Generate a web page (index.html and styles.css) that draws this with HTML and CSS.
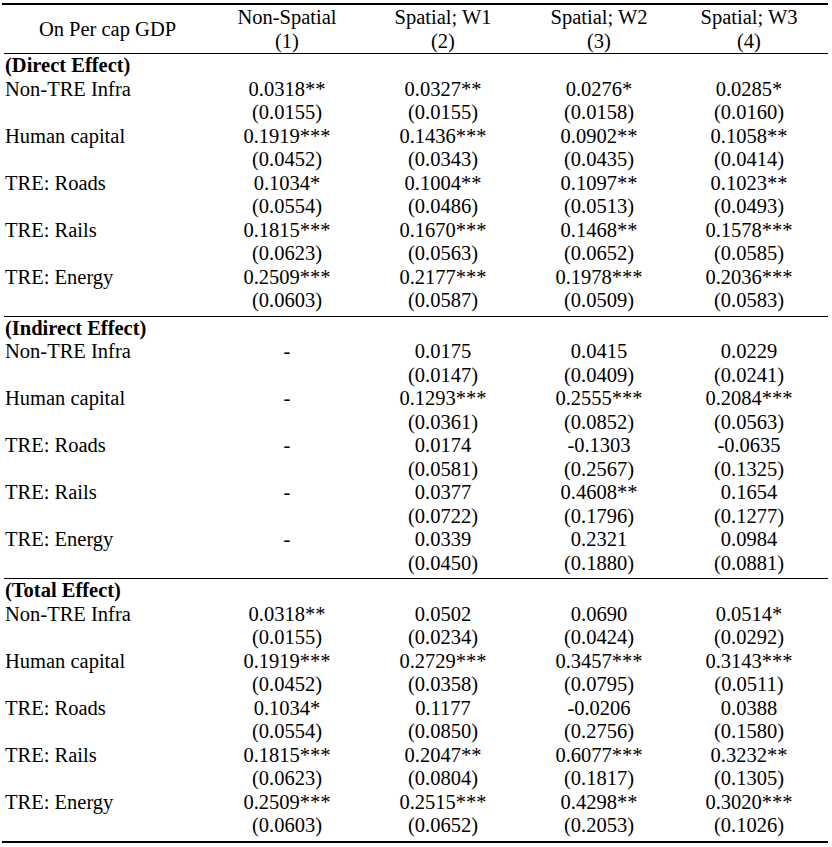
FILE: index.html
```html
<!DOCTYPE html>
<html lang="en">
<head>
<meta charset="utf-8">
<title>On Per cap GDP</title>
<link rel="stylesheet" href="styles.css">
</head>
<body>
<div class="table">
  <div class="rule thick"></div>
  <div class="head">
    <div class="head-label">On Per cap GDP</div>
    <div class="head-cell">Non-Spatial<br>(1)</div>
    <div class="head-cell">Spatial; W1<br>(2)</div>
    <div class="head-cell">Spatial; W2<br>(3)</div>
    <div class="head-cell">Spatial; W3<br>(4)</div>
  </div>
  <div class="rule"></div>

  <div class="block">
    <div class="line"><div class="label bold">(Direct Effect)</div></div>
    <div class="line"><div class="label">Non-TRE Infra</div><div>0.0318**</div><div>0.0327**</div><div>0.0276*</div><div>0.0285*</div></div>
    <div class="line"><div class="label"></div><div>(0.0155)</div><div>(0.0155)</div><div>(0.0158)</div><div>(0.0160)</div></div>
    <div class="line"><div class="label">Human capital</div><div>0.1919***</div><div>0.1436***</div><div>0.0902**</div><div>0.1058**</div></div>
    <div class="line"><div class="label"></div><div>(0.0452)</div><div>(0.0343)</div><div>(0.0435)</div><div>(0.0414)</div></div>
    <div class="line"><div class="label">TRE: Roads</div><div>0.1034*</div><div>0.1004**</div><div>0.1097**</div><div>0.1023**</div></div>
    <div class="line"><div class="label"></div><div>(0.0554)</div><div>(0.0486)</div><div>(0.0513)</div><div>(0.0493)</div></div>
    <div class="line"><div class="label">TRE: Rails</div><div>0.1815***</div><div>0.1670***</div><div>0.1468**</div><div>0.1578***</div></div>
    <div class="line"><div class="label"></div><div>(0.0623)</div><div>(0.0563)</div><div>(0.0652)</div><div>(0.0585)</div></div>
    <div class="line"><div class="label">TRE: Energy</div><div>0.2509***</div><div>0.2177***</div><div>0.1978***</div><div>0.2036***</div></div>
    <div class="line"><div class="label"></div><div>(0.0603)</div><div>(0.0587)</div><div>(0.0509)</div><div>(0.0583)</div></div>
  </div>
  <div class="rule"></div>

  <div class="block">
    <div class="line"><div class="label bold">(Indirect Effect)</div></div>
    <div class="line"><div class="label">Non-TRE Infra</div><div>-</div><div>0.0175</div><div>0.0415</div><div>0.0229</div></div>
    <div class="line"><div class="label"></div><div></div><div>(0.0147)</div><div>(0.0409)</div><div>(0.0241)</div></div>
    <div class="line"><div class="label">Human capital</div><div>-</div><div>0.1293***</div><div>0.2555***</div><div>0.2084***</div></div>
    <div class="line"><div class="label"></div><div></div><div>(0.0361)</div><div>(0.0852)</div><div>(0.0563)</div></div>
    <div class="line"><div class="label">TRE: Roads</div><div>-</div><div>0.0174</div><div>-0.1303</div><div>-0.0635</div></div>
    <div class="line"><div class="label"></div><div></div><div>(0.0581)</div><div>(0.2567)</div><div>(0.1325)</div></div>
    <div class="line"><div class="label">TRE: Rails</div><div>-</div><div>0.0377</div><div>0.4608**</div><div>0.1654</div></div>
    <div class="line"><div class="label"></div><div></div><div>(0.0722)</div><div>(0.1796)</div><div>(0.1277)</div></div>
    <div class="line"><div class="label">TRE: Energy</div><div>-</div><div>0.0339</div><div>0.2321</div><div>0.0984</div></div>
    <div class="line"><div class="label"></div><div></div><div>(0.0450)</div><div>(0.1880)</div><div>(0.0881)</div></div>
  </div>
  <div class="rule"></div>

  <div class="block">
    <div class="line"><div class="label bold">(Total Effect)</div></div>
    <div class="line"><div class="label">Non-TRE Infra</div><div>0.0318**</div><div>0.0502</div><div>0.0690</div><div>0.0514*</div></div>
    <div class="line"><div class="label"></div><div>(0.0155)</div><div>(0.0234)</div><div>(0.0424)</div><div>(0.0292)</div></div>
    <div class="line"><div class="label">Human capital</div><div>0.1919***</div><div>0.2729***</div><div>0.3457***</div><div>0.3143***</div></div>
    <div class="line"><div class="label"></div><div>(0.0452)</div><div>(0.0358)</div><div>(0.0795)</div><div>(0.0511)</div></div>
    <div class="line"><div class="label">TRE: Roads</div><div>0.1034*</div><div>0.1177</div><div>-0.0206</div><div>0.0388</div></div>
    <div class="line"><div class="label"></div><div>(0.0554)</div><div>(0.0850)</div><div>(0.2756)</div><div>(0.1580)</div></div>
    <div class="line"><div class="label">TRE: Rails</div><div>0.1815***</div><div>0.2047**</div><div>0.6077***</div><div>0.3232**</div></div>
    <div class="line"><div class="label"></div><div>(0.0623)</div><div>(0.0804)</div><div>(0.1817)</div><div>(0.1305)</div></div>
    <div class="line"><div class="label">TRE: Energy</div><div>0.2509***</div><div>0.2515***</div><div>0.4298**</div><div>0.3020***</div></div>
    <div class="line"><div class="label"></div><div>(0.0603)</div><div>(0.0652)</div><div>(0.2053)</div><div>(0.1026)</div></div>
  </div>
  <div class="rule thick bottom"></div>
</div>
</body>
</html>
```

FILE: styles.css
```css
html, body {
  margin: 0;
  padding: 0;
  background: #ffffff;
}

body {
  font-family: "Liberation Serif", "Times New Roman", serif;
  font-size: 20.5px;
  color: #000000;
}

.table {
  margin: 3px 0 0 2px;
  width: 826px;
}

.rule {
  height: 0;
  border-top: 1px solid #000000;
  margin-left: 2px;
}

.rule.thick {
  border-top-width: 2px;
  margin-left: 0;
}

.head {
  display: grid;
  grid-template-columns: 205px 154px 158px 154px 146px;
  padding: 1px 0 0 3px;
  line-height: 23.5px;
}

.head-label {
  align-self: center;
  text-align: center;
}

.head-cell {
  text-align: center;
}

.block {
  padding: 0 0 3px 3px;
}

.line {
  display: grid;
  grid-template-columns: 205px 154px 158px 154px 146px;
  height: 23.5px;
  line-height: 23.5px;
  text-align: center;
  white-space: nowrap;
}

.label {
  text-align: left;
}

.bold {
  font-weight: bold;
}
```
